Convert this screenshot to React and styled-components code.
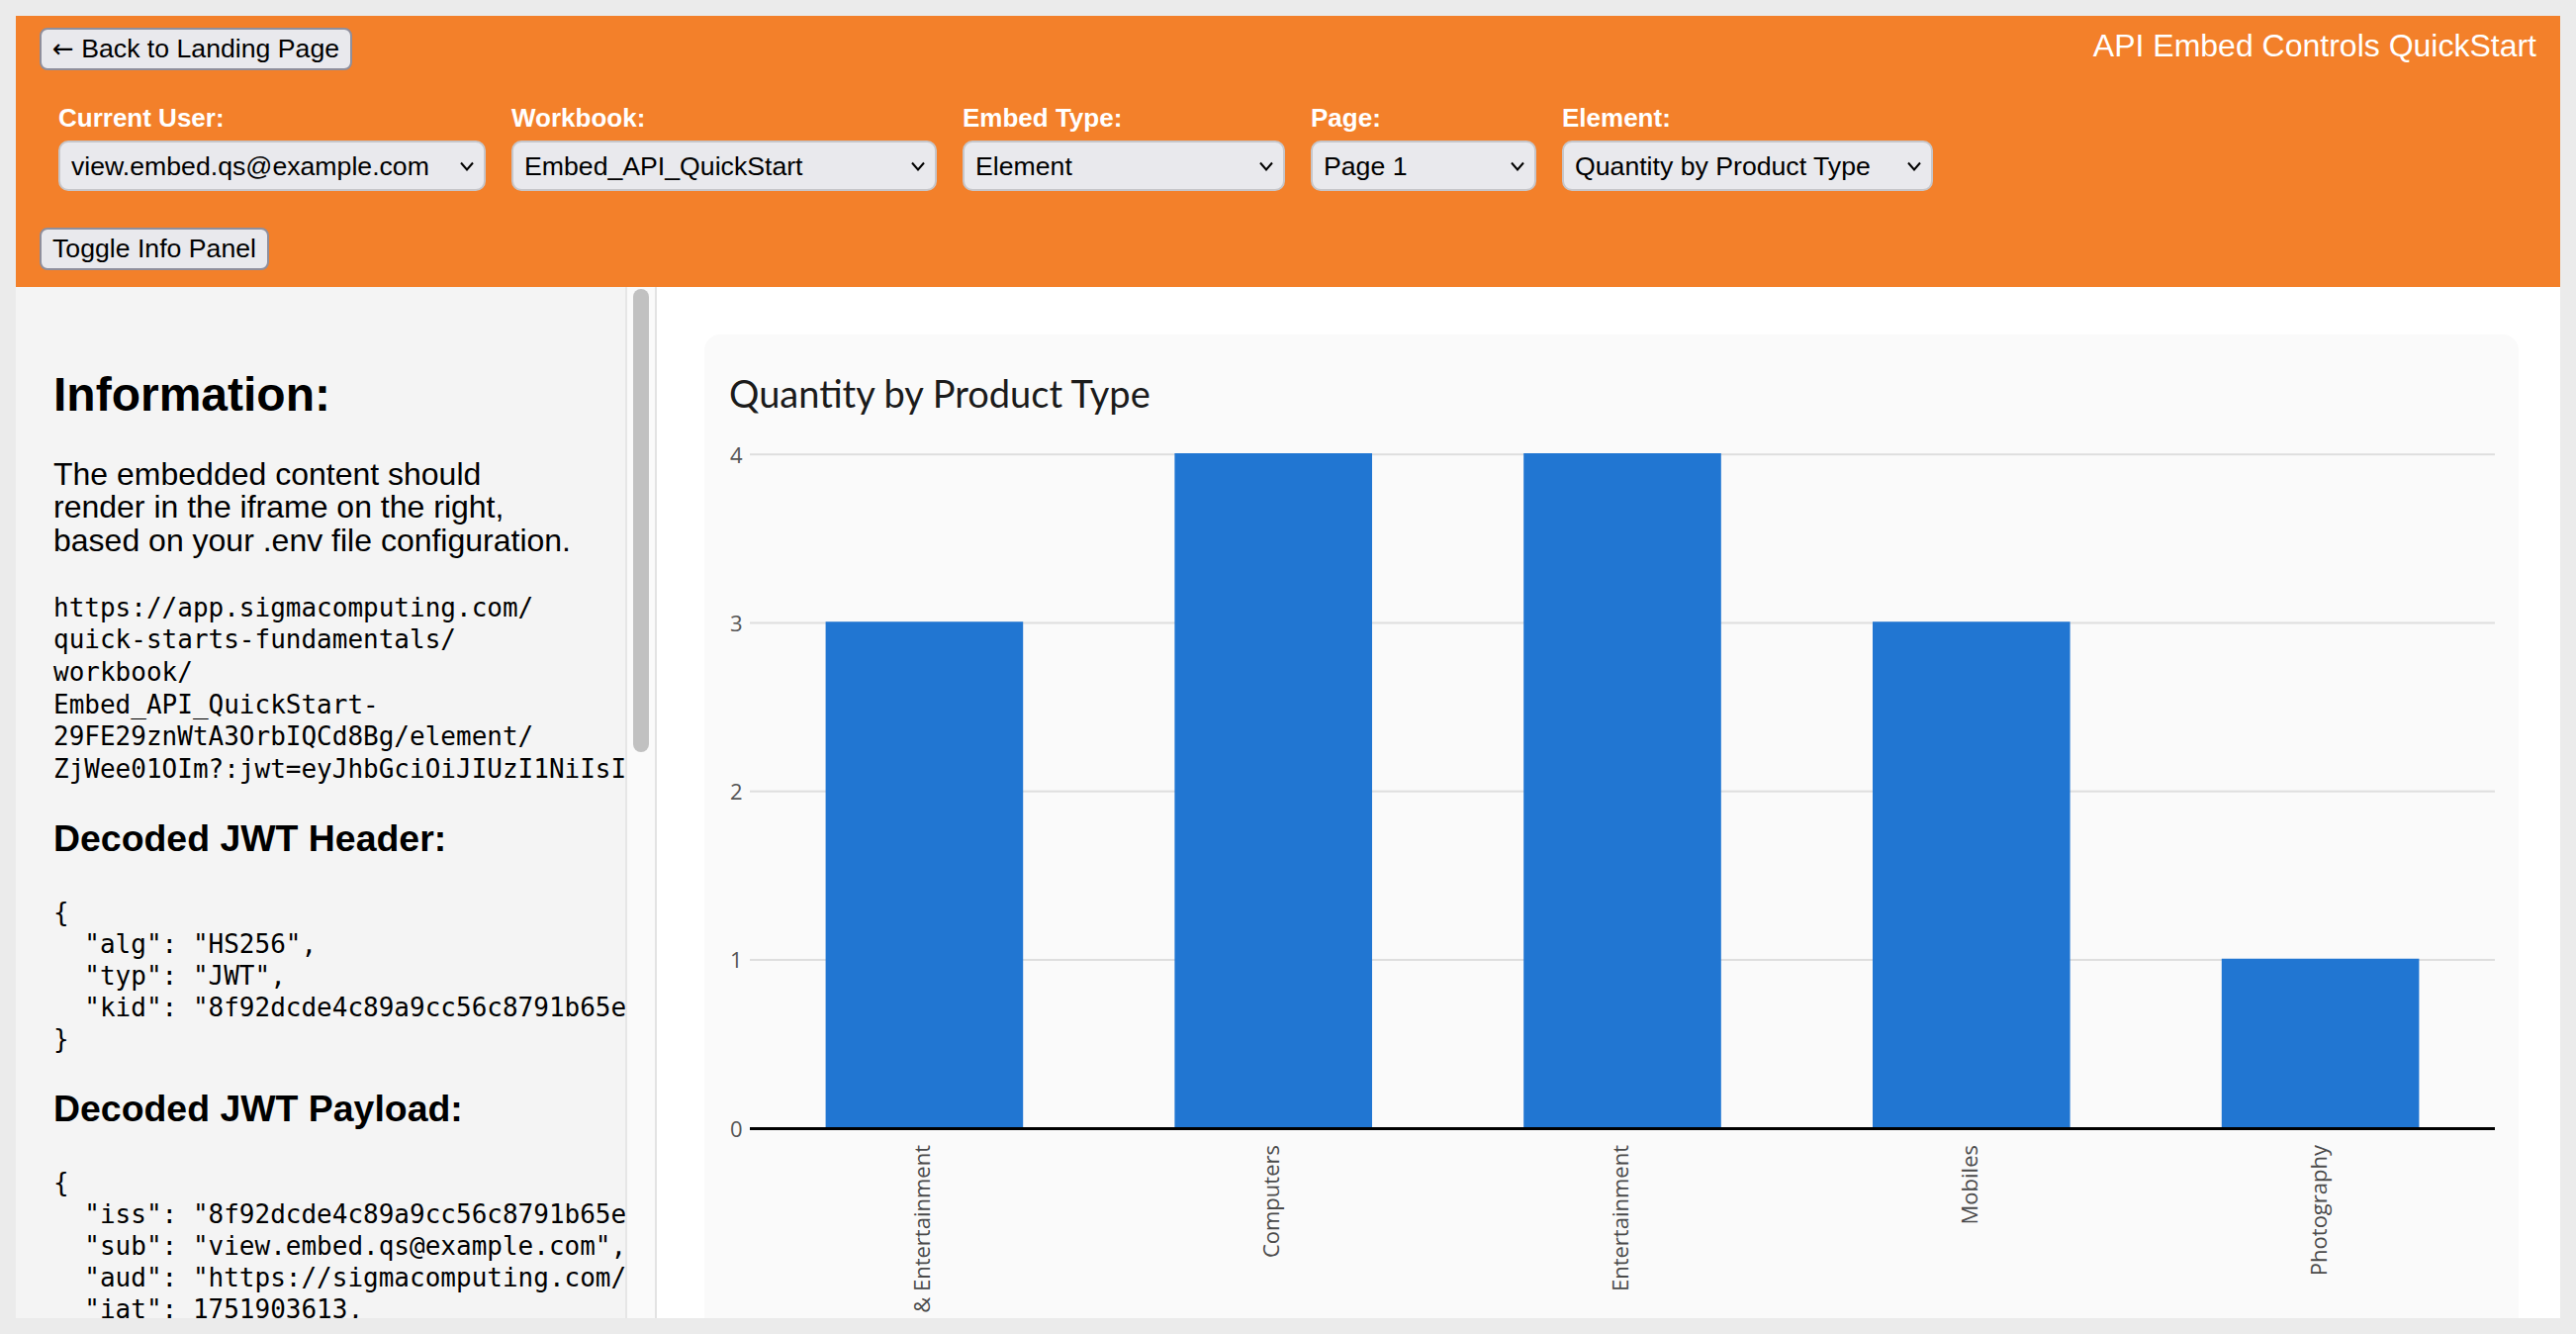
import React from "react";
import styled, { createGlobalStyle } from "styled-components";

const GlobalStyle = createGlobalStyle`
  html { margin: 0; padding: 0; }
  body {
    margin: 16px;
    background: #ebebeb;
    font-family: "Liberation Sans", Arial, Helvetica, sans-serif;
  }
  * { box-sizing: border-box; }
`;

const AppFrame = styled.div`
  height: calc(100vh - 32px);
  display: flex;
  flex-direction: column;
  overflow: hidden;
  background: #fff;
  box-shadow: 0 2px 5px rgba(0, 0, 0, 0.12);
`;

const Header = styled.header`
  flex: none;
  background: #f3802a;
  padding: 12px 24px 17px;
`;

const TopRow = styled.div`
  display: flex;
  justify-content: space-between;
  align-items: flex-start;
`;

const Button = styled.button`
  height: 43px;
  padding: 0 11px;
  font-family: "Liberation Sans", Arial, sans-serif;
  font-size: 26.67px;
  color: #000;
  background: #e9e9ed;
  border: 2px solid #8f8f9d;
  border-radius: 8px;
  white-space: nowrap;
  cursor: pointer;
`;

const ArrowGlyph = styled.span`
  font-family: "DejaVu Sans", sans-serif;
  font-size: 26px;
`;

const AppTitle = styled.h1`
  margin: 0;
  font-size: 32px;
  font-weight: 400;
  line-height: 37px;
  color: #fff;
`;

const ControlsRow = styled.div`
  display: flex;
  gap: 26px;
  margin-top: 33px;
  padding-left: 19px;
`;

const Field = styled.div`
  display: flex;
  flex-direction: column;
  gap: 8px;
`;

const FieldLabel = styled.label`
  font-size: 26px;
  font-weight: 700;
  line-height: 30px;
  color: #fff;
`;

const SelectWrap = styled.div`
  position: relative;
  width: ${(p) => p.$w}px;
`;

const Select = styled.select`
  appearance: none;
  -webkit-appearance: none;
  display: block;
  width: 100%;
  height: 51px;
  padding: 0 44px 0 11px;
  font-family: "Liberation Sans", Arial, sans-serif;
  font-size: 26.67px;
  color: #000;
  background: #e9e9ed;
  border: 2px solid #c6c6ca;
  border-radius: 10px;
  outline: none;
`;

const Chevron = styled.svg`
  position: absolute;
  right: 12px;
  top: 21px;
  pointer-events: none;
`;

const ToggleRow = styled.div`
  margin-top: 37px;
`;

const Main = styled.main`
  flex: 1;
  min-height: 0;
  display: flex;
`;

const InfoPanel = styled.aside`
  flex: none;
  width: 648px;
  display: flex;
  background: #f4f4f4;
  border-right: 2px solid #e3e3e3;
`;

const InfoScroll = styled.div`
  flex: 1;
  min-width: 0;
  overflow: hidden;
`;

const ScrollTrack = styled.div`
  flex: none;
  width: 30px;
  padding: 2px 6px 0;
  background: #fafafa;
  border-left: 2px solid #e6e6e6;
`;

const ScrollThumb = styled.div`
  height: 468px;
  background: #c1c1c1;
  border-radius: 8px;
`;

const InfoContent = styled.div`
  padding: 40px 38px;
  color: #000;
`;

const InfoHeading = styled.h2`
  margin: 41px 0 37px;
  font-size: 48px;
  line-height: 55px;
  font-weight: 700;
`;

const InfoText = styled.p`
  margin: 0 0 35px;
  max-width: 528px;
  font-size: 32px;
  line-height: 33.3px;
`;

const SubHeading = styled.h3`
  margin: 0 0 37px;
  font-size: 37.44px;
  line-height: 43px;
  font-weight: 700;
`;

const Mono = styled.pre`
  margin: 0 0 33px;
  font-family: "DejaVu Sans Mono", "Liberation Mono", monospace;
  font-size: 26px;
  line-height: ${(p) => p.$lh}px;
  white-space: pre;
`;

const EmbedPane = styled.section`
  flex: 1;
  min-width: 0;
  background: #fff;
  padding: 48px 42px 0 48px;
  overflow: hidden;
`;

const ChartCard = styled.div`
  height: 1100px;
  padding-top: 36px;
  background: #fafafa;
  border-radius: 16px;
`;

const ChartTitle = styled.h2`
  margin: 0;
  padding: 0 25px;
  font-family: Lato, "Open Sans", sans-serif;
  font-size: 38px;
  font-weight: 400;
  line-height: 46px;
  color: #1b1b1b;
`;

const ChartSvg = styled.svg`
  display: block;
  margin-top: 20px;
`;

const AxisText = styled.text`
  font-family: "Open Sans", sans-serif;
  font-size: 22px;
  fill: ${(p) => p.$color || "#555"};
`;

const fields = [
  { label: "Current User:", value: "view.embed.qs@example.com", w: 432, options: ["view.embed.qs@example.com", "build.embed.qs@example.com"] },
  { label: "Workbook:", value: "Embed_API_QuickStart", w: 430, options: ["Embed_API_QuickStart"] },
  { label: "Embed Type:", value: "Element", w: 326, options: ["Workbook", "Page", "Element"] },
  { label: "Page:", value: "Page 1", w: 228, options: ["Page 1"] },
  { label: "Element:", value: "Quantity by Product Type", w: 375, options: ["Quantity by Product Type"] },
];

const urlText = [
  "https://app.sigmacomputing.com/",
  "quick-starts-fundamentals/",
  "workbook/",
  "Embed_API_QuickStart-",
  "29FE29znWtA3OrbIQCd8Bg/element/",
  "ZjWee01OIm?:jwt=eyJhbGciOiJIUzI1NiIsInR5cCI6IkpXVCIsImtpZCI6IjhmOTJkY2RlNGM4OWE5Y2M1NmM4NzkxYjY1ZSJ9",
].join("\n");

const headerJson = `{
  "alg": "HS256",
  "typ": "JWT",
  "kid": "8f92dcde4c89a9cc56c8791b65e4a3f1c2d7b9e0"
}`;

const payloadJson = `{
  "iss": "8f92dcde4c89a9cc56c8791b65e4a3f1c2d7b9e0",
  "sub": "view.embed.qs@example.com",
  "aud": "https://sigmacomputing.com/embed",
  "iat": 1751903613,
  "exp": 1751907213,
  "jti": "a7c1e2d4-5b3f-4e8a-9c6d-2f1b0e7a8c93",
  "account_type": "View",
  "teams": [
    "Embed_Users"
  ]
}`;

const chartData = [
  { label: "Arts & Entertainment", value: 3 },
  { label: "Computers", value: 4 },
  { label: "Entertainment", value: 4 },
  { label: "Mobiles", value: 3 },
  { label: "Photography", value: 1 },
];

const PLOT_LEFT = 46;
const PLOT_WIDTH = 1764;
const BAND = PLOT_WIDTH / chartData.length;
const BAR_W = 199.6;
const UNIT = 170.25;
const BASE = 699;

function BarChart() {
  return (
    <ChartSvg width={1834} height={960} viewBox="0 0 1834 960">
      {[1, 2, 3, 4].map((v) => (
        <rect key={v} x={PLOT_LEFT} y={BASE - UNIT * v + 0.2} width={PLOT_WIDTH} height={2} fill="#dedede" />
      ))}
      {chartData.map((d, i) => (
        <rect
          key={d.label}
          x={PLOT_LEFT + i * BAND + (BAND - BAR_W) / 2}
          y={BASE - UNIT * d.value}
          width={BAR_W}
          height={UNIT * d.value}
          fill="#2176d2"
        />
      ))}
      <rect x={PLOT_LEFT} y={BASE} width={PLOT_WIDTH} height={3} fill="#000" />
      {[0, 1, 2, 3, 4].map((v) => (
        <AxisText key={v} x={38.5} y={BASE + 1.2 - UNIT * v + 8.3} textAnchor="end">
          {v}
        </AxisText>
      ))}
      {chartData.map((d, i) => {
        const cx = PLOT_LEFT + i * BAND + BAND / 2;
        return (
          <AxisText key={d.label} $color="#4a4a4a" textAnchor="end" transform={`translate(${cx + 6} 717) rotate(-90)`}>
            {d.label}
          </AxisText>
        );
      })}
    </ChartSvg>
  );
}

export default function App() {
  return (
    <>
      <GlobalStyle />
      <AppFrame>
        <Header>
          <TopRow>
            <Button>
              <ArrowGlyph>←</ArrowGlyph> Back to Landing Page
            </Button>
            <AppTitle>API Embed Controls QuickStart</AppTitle>
          </TopRow>
          <ControlsRow>
            {fields.map((f) => (
              <Field key={f.label}>
                <FieldLabel>{f.label}</FieldLabel>
                <SelectWrap $w={f.w}>
                  <Select defaultValue={f.value}>
                    {f.options.map((o) => (
                      <option key={o} value={o}>
                        {o}
                      </option>
                    ))}
                  </Select>
                  <Chevron width="14" height="10" viewBox="0 0 14 10">
                    <polyline points="1,1.5 7,8.5 13,1.5" fill="none" stroke="#000" strokeWidth="2" />
                  </Chevron>
                </SelectWrap>
              </Field>
            ))}
          </ControlsRow>
          <ToggleRow>
            <Button>Toggle Info Panel</Button>
          </ToggleRow>
        </Header>
        <Main>
          <InfoPanel>
            <InfoScroll>
              <InfoContent>
                <InfoHeading>Information:</InfoHeading>
                <InfoText>
                  The embedded content should render in the iframe on the right, based on your .env file configuration.
                </InfoText>
                <Mono $lh={32.6}>{urlText}</Mono>
                <SubHeading>Decoded JWT Header:</SubHeading>
                <Mono $lh={32}>{headerJson}</Mono>
                <SubHeading>Decoded JWT Payload:</SubHeading>
                <Mono $lh={32}>{payloadJson}</Mono>
              </InfoContent>
            </InfoScroll>
            <ScrollTrack>
              <ScrollThumb />
            </ScrollTrack>
          </InfoPanel>
          <EmbedPane>
            <ChartCard>
              <ChartTitle>Quantity by Product Type</ChartTitle>
              <BarChart />
            </ChartCard>
          </EmbedPane>
        </Main>
      </AppFrame>
    </>
  );
}
